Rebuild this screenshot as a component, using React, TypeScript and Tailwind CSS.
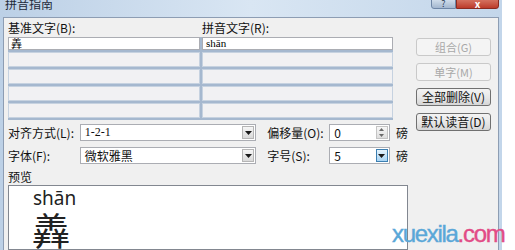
import React from "react";

function DropBtn({ blue }: { blue?: boolean }) {
  return (
    <div
      className={
        blue
          ? "w-[12px] h-full border border-[#3c7fb1] bg-gradient-to-b from-[#e5f3fc] to-[#a9d4f3] flex items-center justify-center"
          : "w-[12px] h-full border border-[#b5b5b5] bg-gradient-to-b from-[#f6f6f6] to-[#d9d9d9] flex items-center justify-center"
      }
    >
      <svg width="7" height="4" viewBox="0 0 7 4">
        <path d="M0 0H7L3.5 4Z" fill="#1a1a1a" />
      </svg>
    </div>
  );
}

function Combo({ cls, value, blue, mono }: { cls: string; value: string; blue?: boolean; mono?: boolean }) {
  return (
    <div className={"flex h-[17px] border border-[#abadb3] bg-white p-[1px] " + cls}>
      <div
        className={
          "flex-1 pl-[3px] text-[12px] leading-[13px] text-[#111] " +
          (mono ? "[font-family:'Liberation_Serif','Noto_Sans_CJK_SC',serif]" : "")
        }
      >
        {value}
      </div>
      <DropBtn blue={blue} />
    </div>
  );
}

function Btn({ label, disabled }: { label: string; disabled?: boolean }) {
  return (
    <div
      className={
        disabled
          ? "h-[18px] w-[75px] rounded-[3px] border border-[#c9c9c9] bg-[#f4f4f4] text-[#a8a8a8] text-[11px] leading-[16px] text-center"
          : "h-[18px] w-[75px] rounded-[3px] border border-[#707070] bg-gradient-to-b from-[#f3f3f3] via-[#e8e8e8] to-[#d6d6d6] text-[#111] text-[12px] leading-[16px] text-center"
      }
    >
      {label}
    </div>
  );
}

export default function App() {
  return (
    <div className="w-[515px] h-[250px] bg-white relative overflow-hidden [font-family:'Noto_Sans_CJK_SC','Noto_Sans',sans-serif]">
      <div className="w-[502px] h-[250px] flex flex-col bg-gradient-to-r from-[#bcd0e6] via-[#d9e6f3] to-[#c3d6ea] px-[3px]">
        {/* title bar */}
        <div className="h-[17px] flex items-start justify-between shrink-0">
          <div className="pl-[2px] -mt-[3px] text-[12px] leading-[14px] text-[#1e2a3a]">拼音指南</div>
          <div className="flex">
            <div className="w-[25px] h-[10px] -mt-[1px] rounded-bl-[3px] border border-[#6e86a6] bg-gradient-to-b from-[#cfdcea] to-[#a3b7cf] flex items-center justify-center text-[9px] leading-[8px] text-[#2d3d55]">
              ?
            </div>
            <div className="w-[43px] h-[10px] -mt-[1px] rounded-br-[3px] border border-[#8a2b22] bg-gradient-to-b from-[#d4705f] to-[#bc3a2a] flex items-center justify-center text-[10px] leading-[8px] font-bold text-white">
              x
            </div>
          </div>
        </div>
        {/* content */}
        <div className="flex-1 flex bg-[#f0f0f0] border-t border-l border-r border-[#8d9db3] pl-[4px] pr-[6px]">
          {/* left column */}
          <div className="w-[400px] flex flex-col">
            <div className="flex h-[19px] pt-[3px] text-[12px] leading-[14px] text-[#111]">
              <div className="w-[194px]">基准文字(B):</div>
              <div>拼音文字(R):</div>
            </div>
            <div className="w-[385px] grid grid-cols-[192px_191px] gap-x-[2px] bg-[#a5b8cf]">
              <div className="h-[13px] bg-white border border-[#abadb3] pl-[2px] text-[11px] leading-[11px]">羴</div>
              <div className="h-[13px] bg-white border border-[#abadb3] pl-[3px] text-[11px] leading-[11px] [font-family:'Liberation_Serif',serif]">
                shān
              </div>
              {[0, 1, 2, 3].map((i) => (
                <React.Fragment key={i}>
                  <div className="h-[15px] mt-[2px] bg-[#f1f1f3] border border-[#c6d2e0]" />
                  <div className="h-[15px] mt-[2px] bg-[#f1f1f3] border border-[#c6d2e0]" />
                </React.Fragment>
              ))}
              <div className="h-[2px]" />
              <div className="h-[2px]" />
            </div>
            <div className="flex items-center mt-[4px] h-[17px] text-[12px] text-[#111]">
              <div className="w-[72px]">对齐方式(L):</div>
              <Combo cls="w-[177px]" value="1-2-1" mono />
              <div className="w-[62px] ml-[11px]">偏移量(O):</div>
              <div className="w-[61px] h-[17px] flex border border-[#abadb3] bg-white p-[1px]">
                <div className="flex-1 pl-[3px] text-[12px] leading-[13px]">0</div>
                <div className="w-[12px] h-full flex flex-col border border-[#c4c4c4] bg-gradient-to-b from-[#f7f7f7] to-[#dedede]">
                  <div className="flex-1 flex items-center justify-center">
                    <svg width="5" height="3" viewBox="0 0 5 3">
                      <path d="M0 3H5L2.5 0Z" fill="#6a6a6a" />
                    </svg>
                  </div>
                  <div className="flex-1 flex items-center justify-center">
                    <svg width="5" height="3" viewBox="0 0 5 3">
                      <path d="M0 0H5L2.5 3Z" fill="#6a6a6a" />
                    </svg>
                  </div>
                </div>
              </div>
              <div className="ml-[6px]">磅</div>
            </div>
            <div className="flex items-center mt-[6px] h-[17px] text-[12px] text-[#111]">
              <div className="w-[72px]">字体(F):</div>
              <Combo cls="w-[177px]" value="微软雅黑" />
              <div className="w-[62px] ml-[11px]">字号(S):</div>
              <Combo cls="w-[61px]" value="5" blue />
              <div className="ml-[6px]">磅</div>
            </div>
            <div className="mt-[7px] h-[14px] text-[12px] leading-[12px] text-[#111]">预览</div>
            <div className="flex-1 bg-white border border-[#828790] pl-[24px] pt-[3px] [font-family:'Noto_Sans','Noto_Sans_CJK_SC',sans-serif] text-[#222]">
              <div className="text-[19px] leading-[19px]">shān</div>
              <div className="mt-[2px] text-[38px] leading-[38px] -ml-[1px] [font-family:'Noto_Sans_CJK_SC',sans-serif]">羴</div>
            </div>
          </div>
          {/* right buttons */}
          <div className="ml-[8px] pt-[20px] flex flex-col gap-[7px]">
            <Btn label="组合(G)" disabled />
            <Btn label="单字(M)" disabled />
            <Btn label="全部删除(V)" />
            <Btn label="默认读音(D)" />
          </div>
        </div>
      </div>
      <div className="absolute left-[392px] top-[220px] text-[24px] leading-[28px] tracking-[-1.3px] [font-family:'Liberation_Sans',sans-serif] [-webkit-text-stroke:0.4px_currentColor]">
        <span className="text-[#5aa7d8]">xuexila</span>
        <span className="text-[#e24c86]">.com</span>
      </div>
    </div>
  );
}
